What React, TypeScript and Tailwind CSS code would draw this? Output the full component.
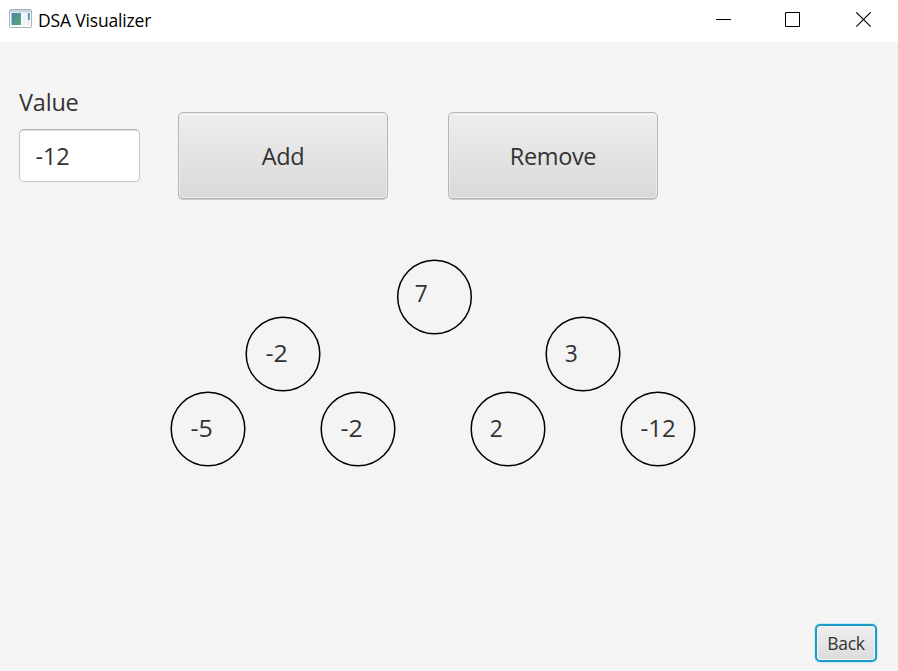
type TreeNode = { cx: number; cy: number; label: string; tx: number; ty: number; width: number };

// Coordinates are relative to the tree canvas, which starts below the controls.
const nodes: TreeNode[] = [
  { cx: 434.5, cy: 47, label: "7", tx: 414.8, ty: 52.3, width: 13 },
  { cx: 283, cy: 104, label: "-2", tx: 265.4, ty: 112.3, width: 22.3 },
  { cx: 583, cy: 104, label: "3", tx: 564.8, ty: 112.3, width: 13 },
  { cx: 208, cy: 179, label: "-5", tx: 190.4, ty: 187.3, width: 22.3 },
  { cx: 358, cy: 179, label: "-2", tx: 340.4, ty: 187.3, width: 22.3 },
  { cx: 508, cy: 179, label: "2", tx: 489.8, ty: 187.3, width: 13 },
  { cx: 658, cy: 179, label: "-12", tx: 640.4, ty: 187.3, width: 35.3 },
];

function AppIcon() {
  return (
    <svg width="24" height="20" viewBox="0 0 24 20">
      <defs>
        <linearGradient id="pane" x1="0" y1="0" x2="1" y2="1">
          <stop offset="0" stopColor="#4a83a6" />
          <stop offset="1" stopColor="#55aa78" />
        </linearGradient>
      </defs>
      <rect x="0.5" y="0.5" width="22" height="18" rx="1" fill="#fbfcfd" stroke="#a9b3bc" />
      <rect x="1" y="1" width="21" height="2.5" fill="#c5d3df" />
      <rect x="2.5" y="4" width="9.5" height="12" fill="url(#pane)" />
      <rect x="13" y="4" width="4" height="12" fill="#f1f3f6" />
      <rect x="18.8" y="4" width="2" height="7" fill="#5e8fae" />
      <rect x="18.5" y="12" width="2" height="4" fill="#e3e6e9" />
    </svg>
  );
}

function TitleBar() {
  return (
    <header className="flex h-[42px] items-start bg-white pl-[9px] pr-[26px]">
      <div className="pt-[9px]"><AppIcon /></div>
      <h1 className="ml-[5px] mt-2 text-[17.5px] leading-6 tracking-[-0.17px] text-black">DSA Visualizer</h1>
      <svg className="ml-auto mt-3" width="156" height="16" viewBox="0 0 156 16" fill="none" stroke="#000">
        <path d="M0 7.5H15" />
        <path d="M69.5 .5H83.5V14.5H69.5Z" />
        <path d="M140.3 .3L154.7 14.7M154.7 .3L140.3 14.7" strokeWidth="1.1" />
      </svg>
    </header>
  );
}

function ActionButton({ label }: { label: string }) {
  return (
    <button className="h-[87px] w-[210px] rounded-[5px] border border-[#b5b5b5] bg-linear-to-b from-[#eeeeee] to-[#d9d9d9] pt-0.5 text-[23.5px] tracking-[-0.35px] shadow-[inset_0_0_0_1px_#ececec,inset_0_2px_0_#f8f8f8,0_1px_0_#c8c8c8]">
      {label}
    </button>
  );
}

export default function App() {
  return (
    <div className="flex h-[671px] w-[898px] flex-col overflow-hidden bg-[#f4f4f4] font-['Open_Sans','Noto_Sans',sans-serif] text-[#333]">
      <TitleBar />
      <section className="flex h-[208px] shrink-0 items-start pl-[19px] pt-11">
        <div className="flex w-[122px] flex-col">
          <label htmlFor="value" className="h-[43px] text-[23.5px] leading-8 tracking-[-0.2px]">Value</label>
          <input
            id="value"
            defaultValue="-12"
            className="h-[53px] w-[121px] rounded-[5px] border border-[#c4c4c4] border-t-[#b0b0b0] bg-white pl-[15.5px] text-[23.5px] tracking-[-0.1px] shadow-[inset_0_2px_1px_-1px_#ddd] outline-none"
          />
        </div>
        <div className="ml-[37px] mt-[26px] flex gap-[60px]">
          <ActionButton label="Add" />
          <ActionButton label="Remove" />
        </div>
      </section>
      <svg width="898" height="250" viewBox="0 0 898 250" className="shrink-0">
        {nodes.map((n) => (
          <g key={n.cx}>
            <circle cx={n.cx} cy={n.cy} r="36.8" fill="none" stroke="#000" strokeWidth="1.5" />
            <text x={n.tx} y={n.ty} fontSize="23.5" fill="#333" textLength={n.width} lengthAdjust="spacingAndGlyphs">{n.label}</text>
          </g>
        ))}
      </svg>
      <footer className="mt-auto flex justify-end pb-[9px] pr-[21px]">
        <button className="h-[38px] w-[62px] rounded-[5px] border-2 border-[#1c9dc9] bg-linear-to-b from-[#eeeeee] to-[#dcdcdc] pt-px text-[17.5px] tracking-[-0.3px] shadow-[inset_0_0_0_1px_#f5f5f5,0_0_0_1px_#c9e9f3]">
          Back
        </button>
      </footer>
    </div>
  );
}
